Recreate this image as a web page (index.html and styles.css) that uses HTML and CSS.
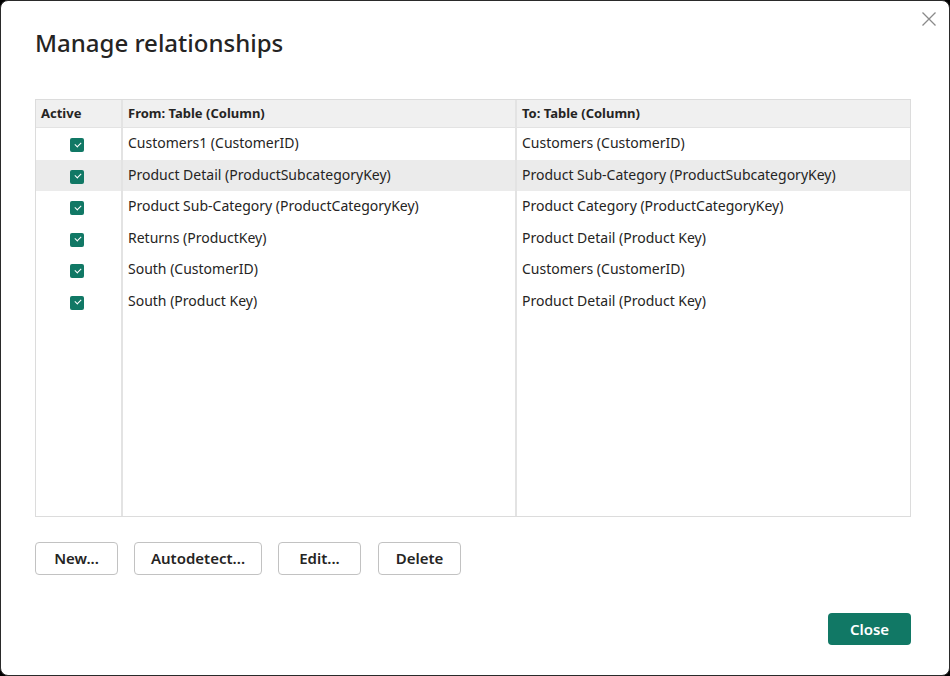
FILE: index.html
```html
<!DOCTYPE html>
<html lang="en">
<head>
<meta charset="utf-8">
<title>Manage relationships</title>
<link rel="stylesheet" href="styles.css">
</head>
<body>
<div class="dialog">
  <button class="close-x" aria-label="Close">
    <svg width="16" height="16" viewBox="0 0 16 16"><path d="M1.5 1.5 L14.5 14.5 M14.5 1.5 L1.5 14.5" stroke="#8a8a8a" stroke-width="1.3" fill="none"/></svg>
  </button>
  <h1 class="title">Manage relationships</h1>
  <div class="grid">
    <div class="row head">
      <div class="cell c-active">Active</div>
      <div class="cell">From: Table (Column)</div>
      <div class="cell last">To: Table (Column)</div>
    </div>
    <div class="row">
      <div class="cell c-active"><span class="check"></span></div>
      <div class="cell">Customers1 (CustomerID)</div>
      <div class="cell last">Customers (CustomerID)</div>
    </div>
    <div class="row sel">
      <div class="cell c-active"><span class="check"></span></div>
      <div class="cell">Product Detail (ProductSubcategoryKey)</div>
      <div class="cell last">Product Sub-Category (ProductSubcategoryKey)</div>
    </div>
    <div class="row">
      <div class="cell c-active"><span class="check"></span></div>
      <div class="cell">Product Sub-Category (ProductCategoryKey)</div>
      <div class="cell last">Product Category (ProductCategoryKey)</div>
    </div>
    <div class="row">
      <div class="cell c-active"><span class="check"></span></div>
      <div class="cell">Returns (ProductKey)</div>
      <div class="cell last">Product Detail (Product Key)</div>
    </div>
    <div class="row">
      <div class="cell c-active"><span class="check"></span></div>
      <div class="cell">South (CustomerID)</div>
      <div class="cell last">Customers (CustomerID)</div>
    </div>
    <div class="row">
      <div class="cell c-active"><span class="check"></span></div>
      <div class="cell">South (Product Key)</div>
      <div class="cell last">Product Detail (Product Key)</div>
    </div>
    <div class="row filler">
      <div class="cell c-active"></div>
      <div class="cell"></div>
      <div class="cell last"></div>
    </div>
  </div>
  <div class="actions">
    <button class="btn btn-new">New...</button>
    <button class="btn btn-auto">Autodetect...</button>
    <button class="btn btn-edit">Edit...</button>
    <button class="btn btn-del">Delete</button>
  </div>
  <div class="footer">
    <button class="btn-primary">Close</button>
  </div>
</div>
</body>
</html>
```

FILE: styles.css
```css
html, body {
  margin: 0;
  padding: 0;
  background: #000;
}
body {
  font-family: "Noto Sans", "Open Sans", sans-serif;
  color: #252423;
}
.dialog {
  position: relative;
  box-sizing: border-box;
  width: 950px;
  height: 676px;
  background: #fff;
  border: 1px solid #2a2a2a;
  border-radius: 8px;
  padding: 25px 38px 30px 34px;
  display: flex;
  flex-direction: column;
}
.close-x {
  position: absolute;
  top: 9px;
  right: 11px;
  width: 18px;
  height: 18px;
  padding: 0;
  border: 0;
  background: transparent;
  display: flex;
  align-items: center;
  justify-content: center;
}
.title {
  margin: 0;
  font-size: 24px;
  font-weight: 500;
  line-height: 34px;
  color: #252423;
}
.grid {
  margin-top: 39px;
  height: 418px;
  box-sizing: border-box;
  border: 1px solid #dcdcdc;
  display: flex;
  flex-direction: column;
}
.row {
  display: grid;
  grid-template-columns: 87px 394px 1fr;
  height: 31.5px;
  font-size: 14px;
}
.row.head {
  height: 27px;
  background: #f0f0f0;
  font-weight: 700;
  font-size: 13px;
  border-bottom: 1px solid #e3e3e3;
}
.row.sel {
  background: #ebebeb;
}
.row.filler {
  flex: 1;
  height: auto;
}
.cell {
  border-right: 2px solid #e3e3e3;
  padding: 0 5px 2px;
  display: flex;
  align-items: center;
  white-space: nowrap;
  overflow: hidden;
}
.cell.last {
  border-right: 0;
}
.row.head .cell {
  padding-bottom: 1px;
}
.row.head .c-active {
  padding-left: 5px;
}
.row:not(.head) .c-active {
  justify-content: center;
  padding: 0 3px 0 0;
}
.row.filler .cell {
  align-items: stretch;
}
.check {
  position: relative;
  width: 14px;
  height: 14px;
  margin-top: 3px;
  border-radius: 2px;
  background: #117865;
}
.check::after {
  content: "";
  position: absolute;
  left: 4.5px;
  top: 3.5px;
  width: 5px;
  height: 3px;
  border-left: 1.6px solid #fff;
  border-bottom: 1.6px solid #fff;
  transform: rotate(-45deg);
}
.actions {
  margin-top: 25px;
  display: flex;
  gap: 16px;
}
.btn {
  height: 33px;
  box-sizing: border-box;
  border: 1px solid #c2c2c2;
  border-radius: 4px;
  background: #fff;
  font-family: inherit;
  font-size: 15px;
  font-weight: 600;
  color: #252423;
  padding: 0 0 1px;
}
.btn-new { width: 83px; }
.btn-auto { width: 128px; }
.btn-edit { width: 83px; }
.btn-del { width: 83px; margin-left: 1px; }
.footer {
  margin-top: auto;
  display: flex;
  justify-content: flex-end;
}
.btn-primary {
  width: 83px;
  height: 32px;
  border: 0;
  border-radius: 4px;
  background: #117865;
  color: #fff;
  font-family: inherit;
  font-size: 15px;
  font-weight: 600;
  padding: 0 0 1px;
}
```
